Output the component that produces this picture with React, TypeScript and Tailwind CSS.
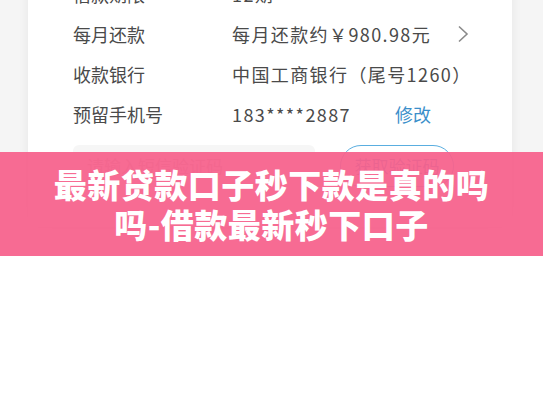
import React from 'react';

const rows = [
  { label: '借款期限', value: '12期' },
  { label: '每月还款', value: '每月还款约￥980.98元', chevron: true },
  { label: '收款银行', value: '中国工商银行（尾号1260）' },
  { label: '预留手机号', value: '183****2887', action: '修改' },
];

export default function App() {
  return (
    <div className="w-[543px] h-[408px] bg-white overflow-hidden font-['Noto_Sans_CJK_SC',_'Noto_Sans',sans-serif]">
      <div className="relative h-[256px] bg-[#f5f5f5] overflow-hidden">
        {/* Screenshot card */}
        <div className="ml-[28px] mr-[31px] -mt-[26px] bg-white rounded-xl shadow-[0_0_12px_rgba(0,0,0,0.06)] pl-[45px] pr-[42px] pb-[40px]">
          {rows.map((r) => (
            <div key={r.label} className="flex items-center h-[40px] text-[18px] text-[#4a4a4a]">
              <span className="w-[159px] shrink-0">{r.label}</span>
              <span className="tracking-[1.4px]">{r.value}</span>
              {r.action && <span className="ml-[44px] text-[#3b8fca]">{r.action}</span>}
              {r.chevron && (
                <svg className="ml-auto w-[14px] h-[18px]" viewBox="0 0 14 18" fill="none">
                  <path d="M3 1.5 L11 9 L3 16.5" stroke="#8a8a8a" strokeWidth="1.6" />
                </svg>
              )}
            </div>
          ))}
          <div className="flex items-center mt-[11px] gap-[25px]">
            <div className="w-[242px] h-[42px] bg-[#f6f6f6] rounded-md flex items-center pl-[14px] text-[17px] text-[#b5b5b5]">
              请输入短信验证码
            </div>
            <div className="w-[114px] h-[42px] rounded-full border border-[#5aaee0] flex items-center justify-center text-[17px] text-[#3b8fca]">
              获取验证码
            </div>
          </div>
        </div>

        {/* Title banner */}
        <div className="absolute left-0 right-0 top-[152px] h-[104px] bg-[#f6628c]/[0.94] flex flex-col items-center justify-center">
          <p className="text-white text-[33px] font-black leading-[40px] text-center tracking-[0.5px]">
            最新贷款口子秒下款是真的吗
          </p>
          <p className="text-white text-[33px] font-black leading-[40px] text-center tracking-[0.5px]">
            吗-借款最新秒下口子
          </p>
        </div>
      </div>
    </div>
  );
}
